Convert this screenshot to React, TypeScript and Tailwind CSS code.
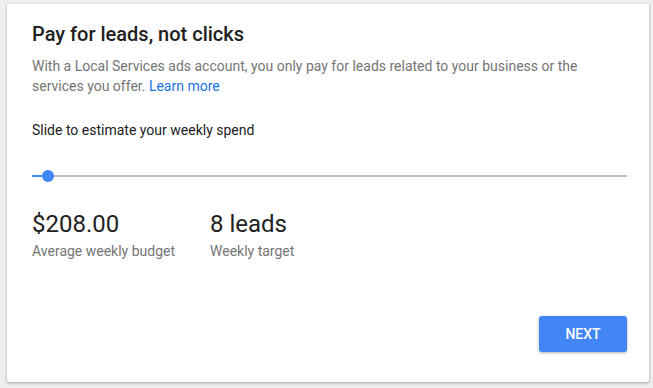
import React from "react";

export default function App() {
  return (
    <div className="w-[653px] h-[388px] bg-[#eeeeee] pt-[4px] pl-[7px]" style={{ fontFamily: "Roboto, 'Liberation Sans', sans-serif" }}>
      <div className="w-[642px] h-[378px] bg-white rounded-[2px] shadow-[0_1px_3px_rgba(0,0,0,0.35)] flex flex-col pl-[25px] pr-[22px] pt-[16px] pb-[30px]">
        <h1 className="text-[20px] leading-[28px] font-medium text-[#212121]">Pay for leads, not clicks</h1>
        <p className="mt-[8px] text-[14px] leading-[20px] text-[#757575] pr-[20px]">
          With a Local Services ads account, you only pay for leads related to your business or the services you offer.{" "}
          <span className="text-[#1a73e8]">Learn more</span>
        </p>
        <div className="mt-[24px] text-[14px] leading-[20px] text-[#212121]">Slide to estimate your weekly spend</div>
        <div className="relative mt-[30px] h-[12px]">
          <div className="absolute left-0 right-0 top-[5px] h-[2px] bg-[#bdbdbd]" />
          <div className="absolute left-0 w-[16px] top-[5px] h-[2px] bg-[#4285f4]" />
          <div className="absolute left-[10px] top-0 w-[12px] h-[12px] rounded-full bg-[#4285f4]" />
        </div>
        <div className="mt-[26px] flex">
          <div className="w-[178px]">
            <div className="text-[24px] leading-[32px] text-[#212121]">$208.00</div>
            <div className="mt-[1px] text-[14px] leading-[20px] text-[#757575]">Average weekly budget</div>
          </div>
          <div>
            <div className="text-[24px] leading-[32px] text-[#212121]">8 leads</div>
            <div className="mt-[1px] text-[14px] leading-[20px] text-[#757575]">Weekly target</div>
          </div>
        </div>
        <div className="mt-auto flex justify-end">
          <button className="w-[88px] h-[36px] rounded-[3px] bg-[#4285f4] text-white text-[14px] font-medium shadow-[0_1px_3px_rgba(0,0,0,0.3)]">NEXT</button>
        </div>
      </div>
    </div>
  );
}
